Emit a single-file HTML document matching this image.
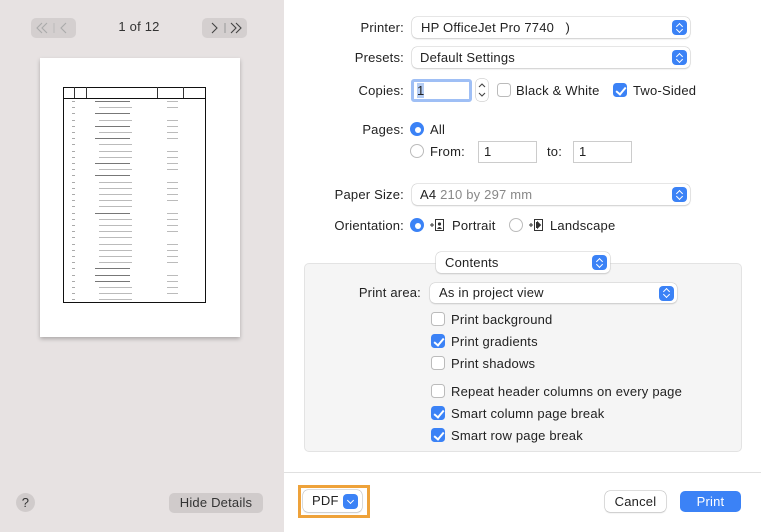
<!DOCTYPE html>
<html><head><meta charset="utf-8"><style>
*{box-sizing:border-box;margin:0;padding:0}
body{width:761px;height:532px;overflow:hidden;background:#fff;font-family:"Liberation Sans",sans-serif;font-size:13px;letter-spacing:0.2px;color:#222;position:relative}
.a{position:absolute}
.side{left:0;top:0;width:284px;height:532px;background:#e7e2e2}
.lbl{text-align:right;line-height:16px}
.pop{background:#fff;border-radius:5px;box-shadow:0 0 0 0.5px #ccc,0 1px 1.5px rgba(0,0,0,.18);line-height:21px;padding-left:9px}
.step{position:absolute;right:3px;top:3px;width:15px;height:15px;border-radius:4px;background:#3b82f6}
.step:before,.step:after{content:"";position:absolute;left:5px;width:4px;height:4px;border:solid #fff;border-width:1.3px 0 0 1.3px}
.step:before{top:3.5px;transform:rotate(45deg)}
.step:after{top:6.5px;transform:rotate(225deg)}
.cb{width:14px;height:14px;border-radius:3.5px;border:1px solid #bbb;background:#fff}
.cb.on{background:#3b82f6;border-color:#3b82f6}
.cb.on:after{content:"";position:absolute;left:4px;top:1px;width:4px;height:8px;border:solid #fff;border-width:0 2px 2px 0;transform:rotate(40deg)}
.rd{width:14px;height:14px;border-radius:50%;border:1px solid #bbb;background:#fff}
.rd.on{background:#3b82f6;border-color:#3b82f6}
.rd.on:after{content:"";position:absolute;left:4px;top:4px;width:6px;height:6px;border-radius:50%;background:#fff}
.fld{border:1px solid #ccc;background:#fff;height:22px;line-height:20px;padding-left:5px}
.t{line-height:16px}
.btn{background:#fff;border-radius:5px;box-shadow:0 0 0 0.5px #bbb,0 1px 1.5px rgba(0,0,0,.15);text-align:center;line-height:21px}
.row{position:absolute;height:1px;background:#aaa}
</style></head><body>
<div class="a side"></div>
<div class="a" style="left:31px;top:18px;width:45px;height:20px;background:#d4cfcf;border-radius:5px"><svg width="45" height="20"><path d="M11 5l-5 5 5 5M16 5l-5 5 5 5M35 5l-5 5 5 5" stroke="#aaa" fill="none" stroke-width="1.1"/><path d="M23 5v10" stroke="#bbb"/></svg></div>
<div class="a" style="left:100px;top:19px;width:78px;text-align:center;font-size:13px;line-height:16px;color:#333">1 of 12</div>
<div class="a" style="left:202px;top:18px;width:45px;height:20px;background:#d4cfcf;border-radius:5px"><svg width="45" height="20"><path d="M10 5l5 5-5 5M29 5l5 5-5 5M34 5l5 5-5 5" stroke="#444" fill="none" stroke-width="1.1"/><path d="M23 5v10" stroke="#999"/></svg></div>
<div class="a" style="left:40px;top:58px;width:200px;height:279px;background:#fff;box-shadow:0 2px 4px rgba(0,0,0,.25)"></div>
<div class="a" style="left:63px;top:87px;width:143px;height:216px;border:1px solid #111"></div>
<div class="a" style="left:63px;top:98px;width:143px;height:1px;background:#111"></div>
<div class="a" style="left:74px;top:87px;width:1px;height:11px;background:#333"></div>
<div class="a" style="left:86px;top:87px;width:1px;height:11px;background:#333"></div>
<div class="a" style="left:157px;top:87px;width:1px;height:11px;background:#333"></div>
<div class="a" style="left:183px;top:87px;width:1px;height:11px;background:#333"></div>
<div id="rows"></div>
<script>
var h='';for(var i=0;i<33;i++){var y=101+i*6.2;var ind=[0,2,4,6,10,12,18,27,28,29].indexOf(i)>=0;h+='<div class="row" style="left:72px;top:'+y+'px;width:3px"></div><div class="row" style="left:'+(ind?95:99)+'px;top:'+y+'px;width:'+(ind?35:33)+'px;background:'+(ind?'#777':'#bbb')+'"></div>'+(i%5!=2?'<div class="row" style="left:167px;top:'+y+'px;width:11px;background:#bbb"></div>':'');}document.getElementById('rows').innerHTML=h;
</script>
<div class="a" style="left:16px;top:493px;width:19px;height:19px;border-radius:50%;background:#d0cbcb;text-align:center;line-height:19px;font-size:13px;color:#333">?</div>
<div class="a" style="left:169px;top:493px;width:94px;height:20px;border-radius:5px;background:#d0cbcb;text-align:center;line-height:20px;color:#333">Hide Details</div>

<div class="a lbl" style="left:300px;top:20px;width:104px">Printer:</div>
<div class="a pop" style="left:412px;top:17px;width:278px;height:21px">HP OfficeJet Pro 7740&nbsp;&nbsp;&nbsp;)<div class="step"></div></div>
<div class="a lbl" style="left:300px;top:50px;width:104px">Presets:</div>
<div class="a pop" style="left:412px;top:47px;width:278px;height:21px;padding-left:8px">Default Settings<div class="step"></div></div>
<div class="a lbl" style="left:300px;top:83px;width:104px">Copies:</div>
<div class="a" style="left:411px;top:79px;width:61px;height:23px;border:3px solid #9fbff5;border-radius:3px;background:#fff;line-height:17px;padding-left:3px"><span style="background:#b5cdf4">1</span></div>
<div class="a" style="left:476px;top:79px;width:12px;height:22px;border-radius:4px;box-shadow:0 0 0 .5px #bbb"><svg width="12" height="22"><path d="M3 8l3-3 3 3M3 14l3 3 3-3" stroke="#444" fill="none" stroke-width="1.1"/></svg></div>
<div class="a cb" style="left:497px;top:83px"></div>
<div class="a t" style="left:516px;top:83px">Black &amp; White</div>
<div class="a cb on" style="left:613px;top:83px"></div>
<div class="a t" style="left:633px;top:83px">Two-Sided</div>
<div class="a lbl" style="left:300px;top:122px;width:104px">Pages:</div>
<div class="a rd on" style="left:410px;top:122px"></div>
<div class="a t" style="left:430px;top:122px">All</div>
<div class="a rd" style="left:410px;top:144px"></div>
<div class="a t" style="left:430px;top:144px">From:</div>
<div class="a fld" style="left:478px;top:141px;width:59px">1</div>
<div class="a t" style="left:547px;top:144px">to:</div>
<div class="a fld" style="left:573px;top:141px;width:59px">1</div>
<div class="a lbl" style="left:300px;top:187px;width:104px">Paper Size:</div>
<div class="a pop" style="left:412px;top:184px;width:278px;height:21px;padding-left:8px">A4 <span style="color:#888">210 by 297 mm</span><div class="step"></div></div>
<div class="a lbl" style="left:300px;top:218px;width:104px">Orientation:</div>
<div class="a rd on" style="left:410px;top:218px"></div>
<div class="a" style="left:429px;top:218px;width:16px;height:14px"><svg width="16" height="14"><path d="M1 7h4M3 5v4" stroke="#333" stroke-width="1"/><rect x="6.5" y="1.5" width="8" height="11" fill="none" stroke="#333"/><circle cx="10.5" cy="6" r="1.6" fill="#333"/><path d="M8 11q2.5-4 5 0z" fill="#333"/></svg></div>
<div class="a t" style="left:452px;top:218px">Portrait</div>
<div class="a rd" style="left:509px;top:218px"></div>
<div class="a" style="left:528px;top:218px;width:16px;height:14px"><svg width="16" height="14"><path d="M1 7h4M3 5v4" stroke="#333" stroke-width="1"/><rect x="6.5" y="1.5" width="8" height="11" fill="none" stroke="#333"/><path d="M8.5 4v6M9.5 4l3 3-3 3z" stroke="#333" fill="#333"/></svg></div>
<div class="a t" style="left:550px;top:218px">Landscape</div>

<div class="a" style="left:304px;top:263px;width:438px;height:189px;background:#f5f5f5;border:1px solid #e3e3e3;border-radius:5px"></div>
<div class="a pop" style="left:436px;top:252px;width:174px;height:21px">Contents<div class="step"></div></div>
<div class="a lbl" style="left:330px;top:285px;width:91px">Print area:</div>
<div class="a pop" style="left:430px;top:283px;width:247px;height:20px;line-height:20px">As in project view<div class="step" style="top:2.5px"></div></div>
<div class="a cb" style="left:431px;top:312px"></div><div class="a t" style="left:451px;top:312px">Print background</div>
<div class="a cb on" style="left:431px;top:334px"></div><div class="a t" style="left:451px;top:334px">Print gradients</div>
<div class="a cb" style="left:431px;top:356px"></div><div class="a t" style="left:451px;top:356px">Print shadows</div>
<div class="a cb" style="left:431px;top:384px"></div><div class="a t" style="left:451px;top:384px">Repeat header columns on every page</div>
<div class="a cb on" style="left:431px;top:406px"></div><div class="a t" style="left:451px;top:406px">Smart column page break</div>
<div class="a cb on" style="left:431px;top:428px"></div><div class="a t" style="left:451px;top:428px">Smart row page break</div>

<div class="a" style="left:284px;top:472px;width:477px;height:1px;background:#e0e0e0"></div>
<div class="a" style="left:298px;top:485px;width:72px;height:33px;border:3px solid #eea23a"></div>
<div class="a btn" style="left:303px;top:490px;width:59px;height:22px;text-align:left;padding-left:9px">PDF<div class="a" style="left:40px;top:4px;width:15px;height:15px;border-radius:4px;background:#3b82f6"><div class="a" style="left:5px;top:3.5px;width:5px;height:5px;border:solid #fff;border-width:0 1.4px 1.4px 0;transform:rotate(45deg)"></div></div></div>
<div class="a btn" style="left:605px;top:491px;width:61px;height:21px">Cancel</div>
<div class="a" style="left:680px;top:491px;width:61px;height:21px;background:#3b82f6;border-radius:5px;color:#fff;text-align:center;line-height:21px">Print</div>
</body></html>
